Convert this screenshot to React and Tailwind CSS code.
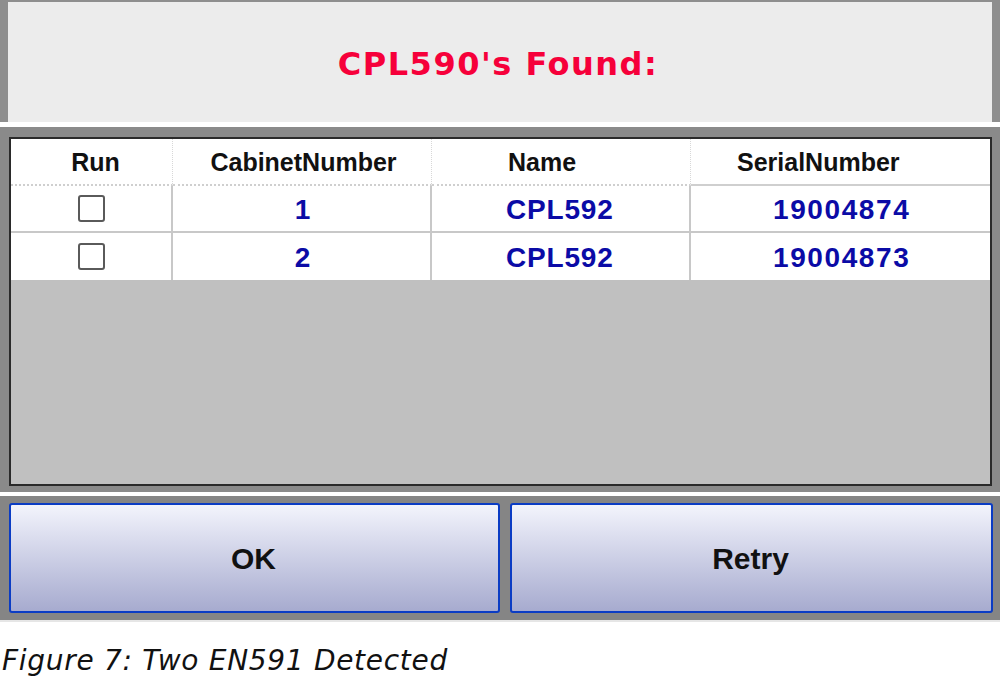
import React from 'react';

const rows = [
  { cabinet: '1', name: 'CPL592', serial: '19004874' },
  { cabinet: '2', name: 'CPL592', serial: '19004873' },
];

const Checkbox = () => (
  <span className="block h-[27px] w-[27px] rounded-[3px] border-2 border-[#5a5a5a] bg-white" />
);

const App = () => {
  return (
    <div className="w-[1000px] h-[678px] bg-white font-['Liberation_Sans',Arial,sans-serif]">
      {/* Title panel */}
      <div className="h-[122px] bg-[#ececec] border-t-2 border-l-[8px] border-r-[8px] border-[#8e8e8e] flex items-center justify-center">
        <h1 className="font-['DejaVu_Sans',sans-serif] font-bold text-[32px] tracking-[1.5px] text-[#f6003a] pr-[4px] mt-[4px]">
          CPL590's Found:
        </h1>
      </div>

      {/* Grid panel */}
      <div className="mt-[5px] h-[365px] bg-[#8a8a8a] pt-[10px] pb-[6px] pl-[9px] pr-[8px]">
        <div className="h-full border-2 border-[#2a2a2a] bg-[#c0c0c0]">
          <div className="grid grid-cols-[162px_259px_259px_1fr] bg-white">
            {/* Header row */}
            <div className="h-[47px] pt-[2px] flex items-center justify-center pl-[8px] text-[25px] font-bold text-[#111] border-r border-dotted border-[#d8d8d8] border-b-2 border-b-[#cfcfcf]">
              Run
            </div>
            <div className="h-[47px] pt-[2px] flex items-center justify-center pl-[3px] text-[25px] font-bold text-[#111] border-r border-dotted border-[#d8d8d8] border-b-2 border-b-[#cfcfcf]">
              CabinetNumber
            </div>
            <div className="h-[47px] pt-[2px] flex items-center pl-[76px] text-[25px] font-bold text-[#111] border-r border-dotted border-[#d8d8d8] border-b-2 border-b-[#cfcfcf]">
              Name
            </div>
            <div className="h-[47px] pt-[2px] flex items-center pl-[46px] text-[25px] font-bold text-[#111] border-b-2 border-b-[#cfcfcf]">
              SerialNumber
            </div>

            {rows.map((r, i) => (
              <React.Fragment key={i}>
                <div className={`h-[47px] flex items-center justify-center border-r-2 border-[#c8c8c8] ${i === 0 ? 'border-b-2' : ''}`}>
                  <Checkbox />
                </div>
                <div className={`h-[47px] pt-[2px] flex items-center justify-center pl-[2px] text-[28px] font-bold text-[#0b0ba6] border-r-2 border-[#c8c8c8] ${i === 0 ? 'border-b-2' : ''}`}>
                  {r.cabinet}
                </div>
                <div className={`h-[47px] pt-[2px] flex items-center pl-[74px] text-[28px] font-bold tracking-[0.8px] text-[#0b0ba6] border-r-2 border-[#c8c8c8] ${i === 0 ? 'border-b-2' : ''}`}>
                  {r.name}
                </div>
                <div className={`h-[47px] pt-[2px] flex items-center pl-[82px] text-[28px] font-bold tracking-[1.6px] text-[#0b0ba6] border-[#c8c8c8] ${i === 0 ? 'border-b-2' : ''}`}>
                  {r.serial}
                </div>
              </React.Fragment>
            ))}
          </div>
        </div>
      </div>

      {/* Buttons panel */}
      <div className="mt-[4px] h-[124px] bg-[#858585] pt-[7px] pb-[7px] pl-[9px] pr-[7px] flex gap-[10px]">
        <button className="w-[491px] rounded-[3px] border-2 border-[#0b3cc4] bg-gradient-to-b from-[#f3f4fc] to-[#a7abcf] flex items-center justify-center pr-[2px] text-[30px] font-bold text-[#111]">
          OK
        </button>
        <button className="flex-1 rounded-[3px] border-2 border-[#0b3cc4] bg-gradient-to-b from-[#f3f4fc] to-[#a7abcf] flex items-center justify-center pr-[2px] text-[30px] font-bold text-[#111]">
          Retry
        </button>
      </div>
      <div className="h-[2px] bg-[#e6e6e6]" />

      {/* Caption */}
      <p className="mt-[23px] pl-[2px] font-['DejaVu_Sans',Verdana,sans-serif] italic text-[28px] tracking-[0.7px] leading-[32px] text-[#111]">
        Figure 7: Two EN591 Detected
      </p>
    </div>
  );
};

export default App;
